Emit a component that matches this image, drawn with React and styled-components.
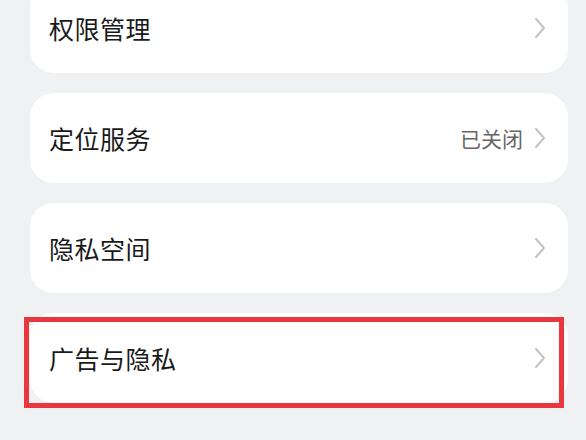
import React from "react";
import styled, { createGlobalStyle } from "styled-components";

const Global = createGlobalStyle`
  html, body {
    margin: 0;
    padding: 0;
    background: #f0f1f3;
    font-family: "Noto Sans CJK SC", "Noto Sans", sans-serif;
  }
`;

const Page = styled.div`
  width: 586px;
  height: 440px;
  overflow: hidden;
  background: #f0f1f3;
`;

const List = styled.div`
  display: flex;
  flex-direction: column;
  gap: 20px;
  margin-top: -17px;
  padding-left: 30px;
  width: 538px;
`;

const Card = styled.div`
  position: relative;
  height: 90px;
  background: #fff;
  border-radius: 24px;
  display: flex;
  align-items: center;
  padding: 0 23px 0 19px;
`;

const Title = styled.span`
  flex: 1;
  font-size: 25px;
  font-weight: 400;
  color: #1a1a1a;
  letter-spacing: 0.5px;
`;

const Value = styled.span`
  font-size: 21px;
  color: #666;
  margin-right: 12px;
`;

const Highlight = styled.div`
  position: absolute;
  left: -6px;
  top: 4px;
  width: 540px;
  height: 91px;
  box-sizing: border-box;
  border: 5px solid #ea363e;
  pointer-events: none;
`;

const Chevron = () => (
  <svg width="10" height="20" viewBox="0 0 10 20">
    <path d="M1 1 L9 10 L1 19" fill="none" stroke="#c2c2c2" strokeWidth="2" strokeLinecap="round" strokeLinejoin="round" />
  </svg>
);

const items = [
  { title: "权限管理" },
  { title: "定位服务", value: "已关闭" },
  { title: "隐私空间" },
  { title: "广告与隐私", marked: true },
];

export default function App() {
  return (
    <Page>
      <Global />
      <List>
        {items.map((it) => (
          <Card key={it.title}>
            <Title>{it.title}</Title>
            {it.value && <Value>{it.value}</Value>}
            <Chevron />
            {it.marked && <Highlight />}
          </Card>
        ))}
      </List>
    </Page>
  );
}
